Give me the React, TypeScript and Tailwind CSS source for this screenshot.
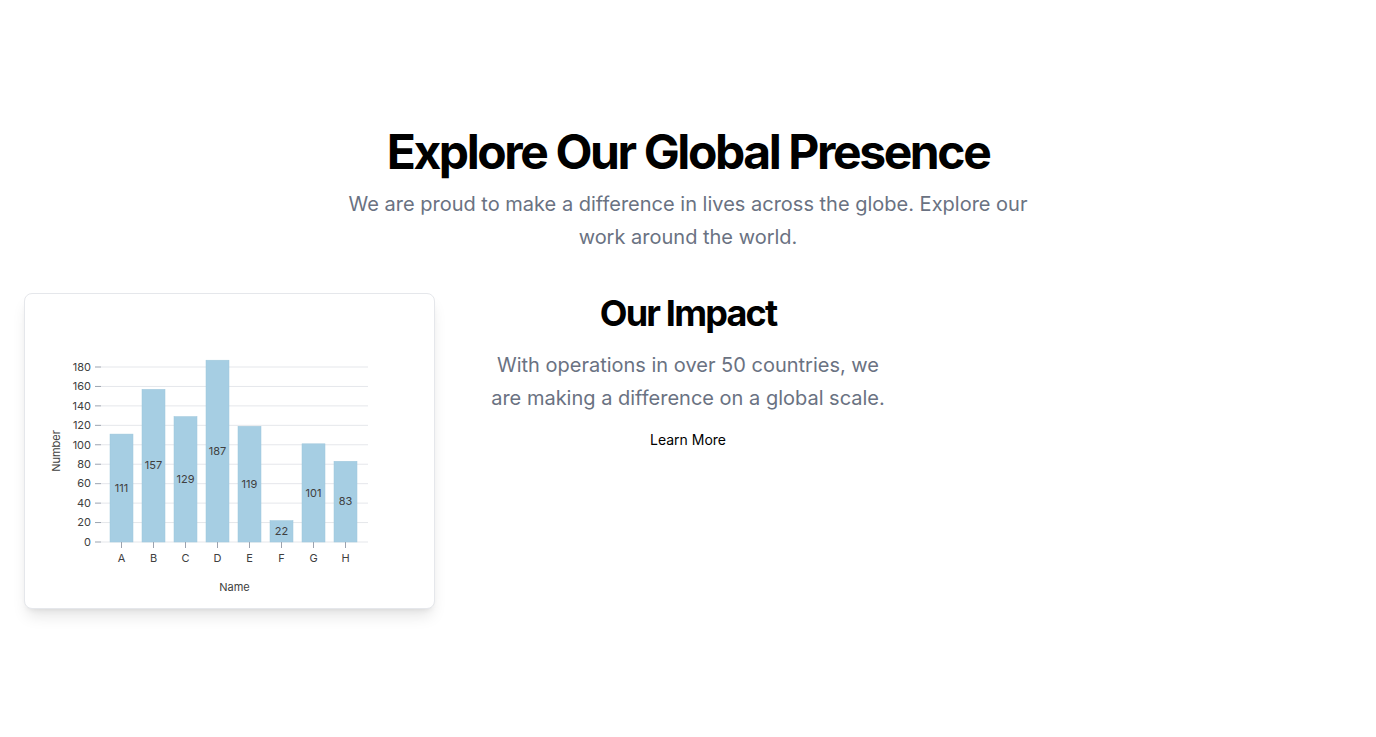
import React from "react";

const data = [
  { name: "A", value: 111 },
  { name: "B", value: 157 },
  { name: "C", value: 129 },
  { name: "D", value: 187 },
  { name: "E", value: 119 },
  { name: "F", value: 22 },
  { name: "G", value: 101 },
  { name: "H", value: 83 },
];

const y0 = 542;
const k = 175 / 180;
const yOf = (v: number) => y0 - v * k;

function Chart() {
  const ticks = [0, 20, 40, 60, 80, 100, 120, 140, 160, 180];
  return (
    <svg
      className="block h-[314px] w-full"
      viewBox="25 294 408 314"
      preserveAspectRatio="xMinYMin meet"
      style={{ fontFamily: "Inter, 'Noto Sans', sans-serif" }}
    >
      {ticks.map((t) => (
        <g key={t}>
          <line x1={101} x2={368} y1={yOf(t)} y2={yOf(t)} stroke="#e5e7eb" strokeWidth={1} />
          <line x1={95} x2={101} y1={yOf(t)} y2={yOf(t)} stroke="#9ca3af" strokeWidth={1} />
          <text x={91} y={yOf(t)} dy="0.34em" textAnchor="end" fontSize={11} fill="#404040">
            {t}
          </text>
        </g>
      ))}
      {data.map((d, i) => {
        const x = 110 + i * 32;
        const top = yOf(d.value);
        return (
          <g key={d.name}>
            <rect x={x} y={top} width={23} height={y0 - top} fill="#a6cee3" stroke="#9cc6dc" strokeWidth={0.5} />
            <text x={x + 11.5} y={(top + y0) / 2} dy="0.34em" textAnchor="middle" fontSize={11} fill="#404040">
              {d.value}
            </text>
            <line x1={x + 11.5} x2={x + 11.5} y1={y0} y2={y0 + 6} stroke="#9ca3af" strokeWidth={1} />
            <text x={x + 11.5} y={558} dy="0.34em" textAnchor="middle" fontSize={11} fill="#404040">
              {d.name}
            </text>
          </g>
        );
      })}
      <text x={234.5} y={587} dy="0.34em" textAnchor="middle" fontSize={11} fill="#404040">
        Name
      </text>
      <text
        x={0}
        y={0}
        dy="0.34em"
        textAnchor="middle"
        fontSize={11}
        fill="#404040"
        transform="translate(56 451) rotate(-90)"
      >
        Number
      </text>
    </svg>
  );
}

export default function App() {
  return (
    <div className="min-h-screen bg-white font-['Inter','Noto_Sans',sans-serif]">
      <section className="pt-32 pb-16">
        <div className="px-6 text-center">
          <h2 className="text-5xl font-bold tracking-tighter text-black">Explore Our Global Presence</h2>
          <p className="mx-auto mt-3 max-w-[700px] text-xl leading-relaxed text-gray-500">
            We are proud to make a difference in lives across the globe. Explore our work around the world.
          </p>
        </div>
        <div className="mt-10 grid grid-cols-3 gap-12 px-6">
          <div className="rounded-lg border border-gray-200 bg-white shadow-lg">
            <Chart />
          </div>
          <div className="flex flex-col items-center text-center">
            <h3 className="text-4xl font-bold tracking-tighter text-black">Our Impact</h3>
            <p className="mt-4 text-xl leading-relaxed text-gray-500">
              With operations in over 50 countries, we are making a difference on a global scale.
            </p>
            <button className="mt-4 text-sm font-normal text-black">Learn More</button>
          </div>
          <div />
        </div>
      </section>
    </div>
  );
}
